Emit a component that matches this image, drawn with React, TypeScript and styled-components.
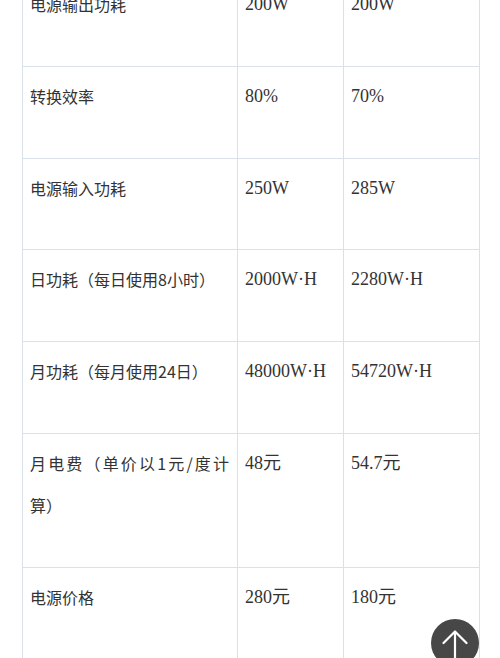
import React from 'react';
import styled, { createGlobalStyle } from 'styled-components';

const GlobalStyle = createGlobalStyle`
  html, body {
    margin: 0;
    padding: 0;
    background: #ffffff;
  }
  body {
    overflow: hidden;
    font-family: 'Noto Sans CJK SC', sans-serif;
  }
`;

const BORDER = '#d9e2ea';
const TEXT = '#333333';

const rows = [
  { label: '电源输出功耗', a: '200W', b: '200W' },
  { label: '转换效率', a: '80%', b: '70%' },
  { label: '电源输入功耗', a: '250W', b: '285W' },
  { label: '日功耗（每日使用8小时）', a: '2000W·H', b: '2280W·H' },
  { label: '月功耗（每月使用24日）', a: '48000W·H', b: '54720W·H' },
  { label: '月电费（单价以1元/度计算）', a: '48元', b: '54.7元' },
  { label: '电源价格', a: '280元', b: '180元' },
];

const App: React.FC = () => {
  return (
    <Page>
      <GlobalStyle />
      <Table>
        <colgroup>
          <col style={{ width: 215 }} />
          <col style={{ width: 106 }} />
          <col style={{ width: 136 }} />
        </colgroup>
        <tbody>
          {rows.map((row) => (
            <tr key={row.label}>
              <LabelCell>{row.label}</LabelCell>
              <ValueCell>{row.a}</ValueCell>
              <ValueCell>{row.b}</ValueCell>
            </tr>
          ))}
        </tbody>
      </Table>
      <BackToTop aria-label="回到顶部">
        <svg width="48" height="48" viewBox="0 0 48 48">
          <path
            d="M12.5 24 L24 12.5 L35.5 24 M24 12.5 V48"
            fill="none"
            stroke="#ffffff"
            strokeWidth="2.2"
            strokeLinecap="round"
            strokeLinejoin="round"
          />
        </svg>
      </BackToTop>
    </Page>
  );
};

export default App;

const Page = styled('div')`
  width: 500px;
  height: 658px;
  overflow: hidden;
  background: #ffffff;
`;

const Table = styled('table')`
  width: 457px;
  margin: -26px 21px 0 22px;
  border-collapse: collapse;
  table-layout: fixed;
  border: 1px solid ${BORDER};
`;

const Cell = styled('td')`
  border: 1px solid ${BORDER};
  padding: 8px 8px 40.8px 7px;
  line-height: 42px;
  vertical-align: top;
  text-align: justify;
  color: ${TEXT};
  word-break: break-all;
`;

const LabelCell = styled(Cell)`
  font-family: 'Noto Sans CJK SC', sans-serif;
  font-size: 16px;
`;

const ValueCell = styled(Cell)`
  font-family: 'Liberation Serif', 'Noto Sans CJK SC', serif;
  font-size: 18px;
`;

const BackToTop = styled('button')`
  position: fixed;
  left: 431px;
  top: 619px;
  width: 48px;
  height: 48px;
  padding: 0;
  border: none;
  border-radius: 50%;
  background: #474747;
  overflow: hidden;
  display: flex;
  align-items: flex-start;
  justify-content: center;
  cursor: pointer;
`;
